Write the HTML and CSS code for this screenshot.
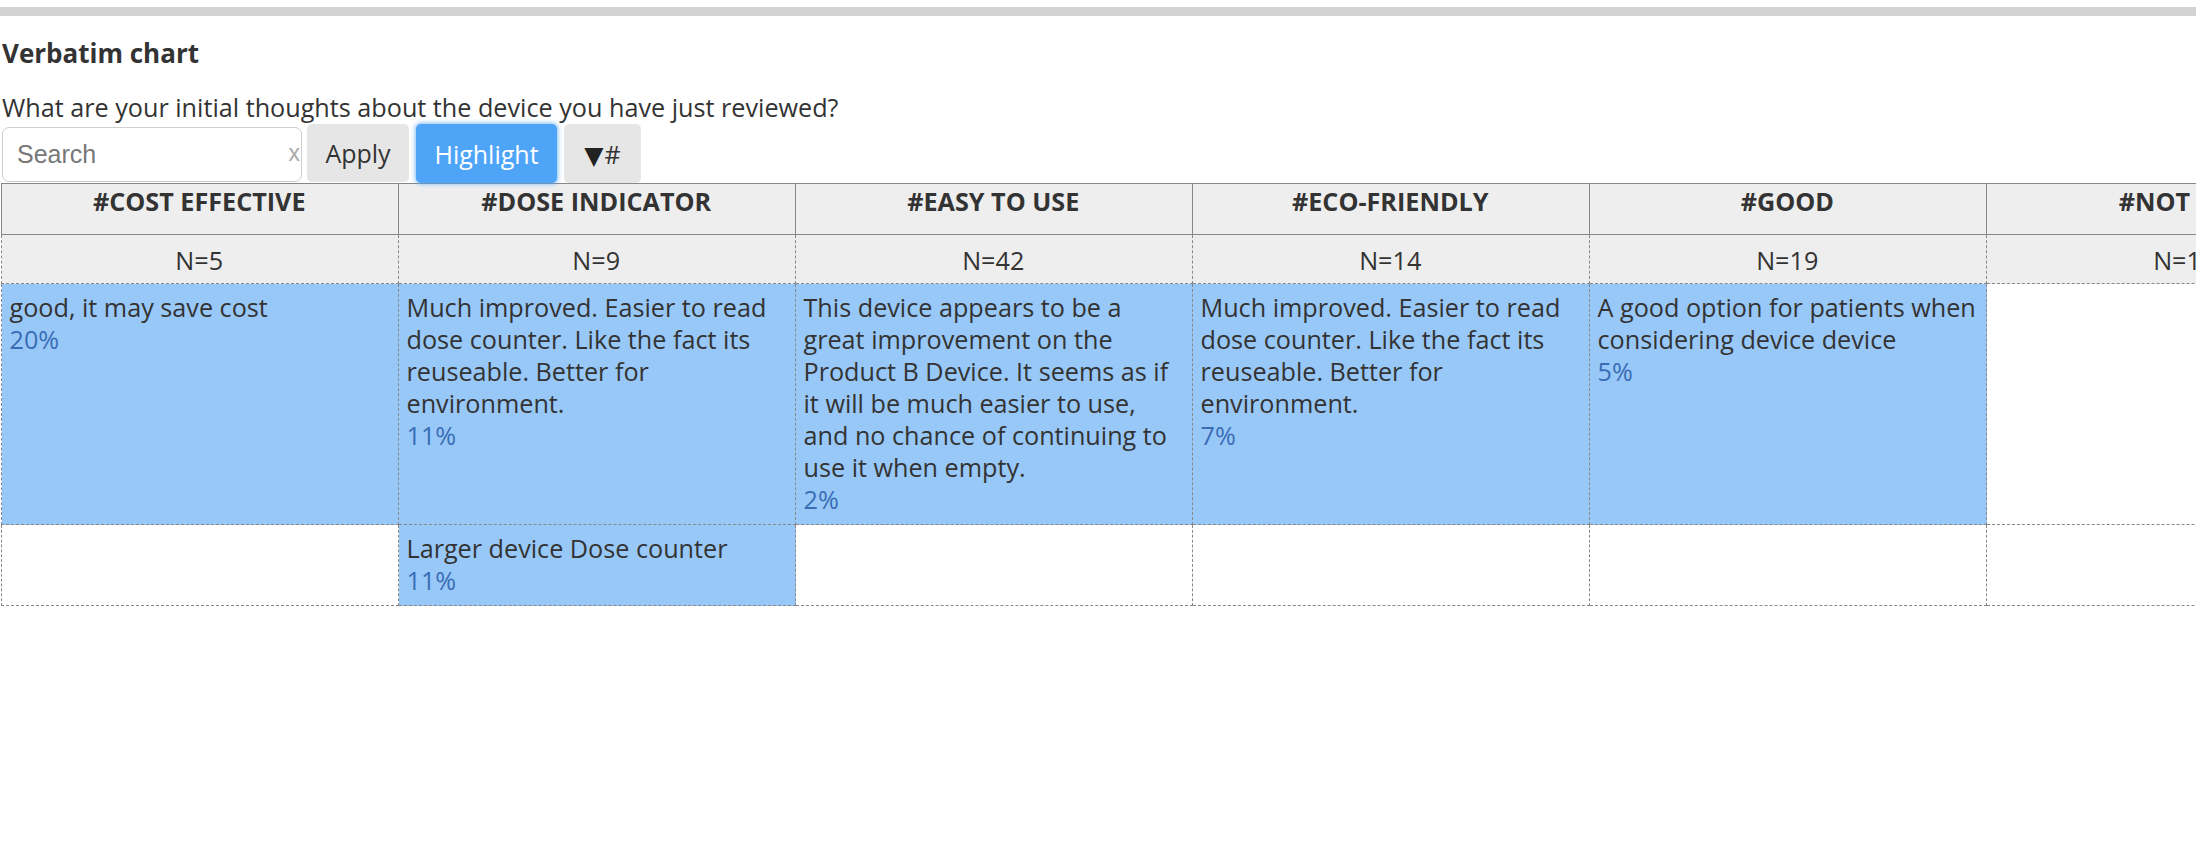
FILE: index.html
```html
<!DOCTYPE html>
<html>
<head>
<meta charset="utf-8">
<link rel="stylesheet" href="styles.css">
</head>
<body>
<div class="page">
  <div class="topbar"></div>
  <div class="title">Verbatim chart</div>
  <div class="question">What are your initial thoughts about the device you have just reviewed?</div>
  <div class="toolbar">
    <div class="search">
      <input class="search-input" type="text" placeholder="Search">
      <span class="search-clear">x</span>
    </div>
    <button class="btn btn-apply">Apply</button>
    <button class="btn btn-highlight">Highlight</button>
    <button class="btn btn-sort"><span class="tri">▼</span>#</button>
  </div>
  <div class="table-wrap">
    <table class="chart">
      <colgroup>
        <col class="c"><col class="c"><col class="c"><col class="c"><col class="c"><col class="c">
      </colgroup>
      <thead>
        <tr class="head">
          <th>#COST EFFECTIVE</th>
          <th>#DOSE INDICATOR</th>
          <th>#EASY TO USE</th>
          <th>#ECO-FRIENDLY</th>
          <th>#GOOD</th>
          <th>#NOT BAD</th>
        </tr>
        <tr class="count">
          <td>N=5</td>
          <td>N=9</td>
          <td>N=42</td>
          <td>N=14</td>
          <td>N=19</td>
          <td>N=12</td>
        </tr>
      </thead>
      <tbody>
        <tr>
          <td class="hl">good, it may save cost<div class="pct">20%</div></td>
          <td class="hl">Much improved. Easier to read dose counter. Like the fact its reuseable. Better for environment.<div class="pct">11%</div></td>
          <td class="hl">This device appears to be a great improvement on the Product B Device. It seems as if it will be much easier to use, and no chance of continuing to use it when empty.<div class="pct">2%</div></td>
          <td class="hl">Much improved. Easier to read dose counter. Like the fact its reuseable. Better for environment.<div class="pct">7%</div></td>
          <td class="hl">A good option for patients when considering device device<div class="pct">5%</div></td>
          <td></td>
        </tr>
        <tr>
          <td></td>
          <td class="hl">Larger device Dose counter<div class="pct">11%</div></td>
          <td></td>
          <td></td>
          <td></td>
          <td></td>
        </tr>
      </tbody>
    </table>
  </div>
</div>
</body>
</html>
```
FILE: styles.css
```css
html, body {
  margin: 0;
  padding: 0;
  background: #fff;
}
body {
  font-family: "Open Sans", "Liberation Sans", sans-serif;
  color: #333;
  overflow: hidden;
}
.page {
  padding-top: 7px;
}
.topbar {
  height: 9px;
  background: #d3d3d3;
}
.title {
  margin-top: 21px;
  padding-left: 2px;
  font-size: 26px;
  font-weight: 700;
  line-height: 33px;
}
.question {
  margin-top: 21px;
  padding-left: 2px;
  font-size: 25.2px;
  line-height: 33px;
}
.toolbar {
  display: flex;
  align-items: flex-start;
  height: 59px;
  padding-left: 2px;
}
.search {
  position: relative;
  margin-top: 3px;
  width: 300px;
  height: 55px;
  box-sizing: border-box;
  border: 1px solid #cfcfcf;
  border-radius: 7px;
  background: #fff;
  display: flex;
  align-items: center;
}
.search-input {
  border: none;
  outline: none;
  background: transparent;
  width: 260px;
  padding: 0 0 0 14px;
  font-family: "Liberation Sans", Arial, sans-serif;
  font-size: 25px;
  color: #555;
}
.search-input::placeholder {
  color: #777;
}
.search-clear {
  position: absolute;
  right: 1px;
  top: 12px;
  font-family: "Liberation Sans", Arial, sans-serif;
  font-size: 23px;
  color: #aaa;
}
.btn {
  border: none;
  margin: 0;
  height: 58px;
  border-radius: 5px;
  background: #e6e6e6;
  font-family: "Open Sans", sans-serif;
  font-size: 25px;
  color: #333;
  padding: 0;
  cursor: pointer;
}
.btn-apply {
  margin-left: 5px;
  width: 102px;
}
.btn-highlight {
  margin-left: 7px;
  width: 141px;
  height: 59px;
  background: #4ea4f7;
  color: #fff;
  box-shadow: 0 0 4px 1px rgba(78, 164, 247, 0.7);
}
.btn-sort {
  margin-left: 7px;
  width: 77px;
  height: 59px;
}
.tri {
  font-family: "DejaVu Sans", sans-serif;
  font-size: 25px;
  color: #222;
  margin-right: 1px;
}
.table-wrap {
  width: 100%;
  overflow: hidden;
  padding-left: 1px;
}
.chart {
  border-collapse: collapse;
  table-layout: fixed;
  width: 2382px;
}
.chart col.c {
  width: 397px;
}
.chart th,
.chart td {
  font-size: 25.2px;
  line-height: 32.14px;
  padding: 6.5px 9px 9px 7.5px;
  vertical-align: top;
  text-align: left;
}
.head th {
  height: 51px;
  box-sizing: border-box;
  padding-top: 1px;
  padding-bottom: 0;
  background: #eee;
  font-weight: 700;
  text-align: center;
  border: 1px solid #888;
}
.count td {
  height: 49px;
  box-sizing: border-box;
  background: #eee;
  text-align: center;
  vertical-align: middle;
  padding-top: 1.5px;
  padding-bottom: 0;
  border-left: 1px dashed #888;
  border-right: 1px dashed #888;
  border-bottom: 1px dashed #888;
}
tbody td {
  border: 1px dashed #888;
}
tbody td.hl {
  background: #98c8f8;
}
.pct {
  color: #3a6db5;
}
```
